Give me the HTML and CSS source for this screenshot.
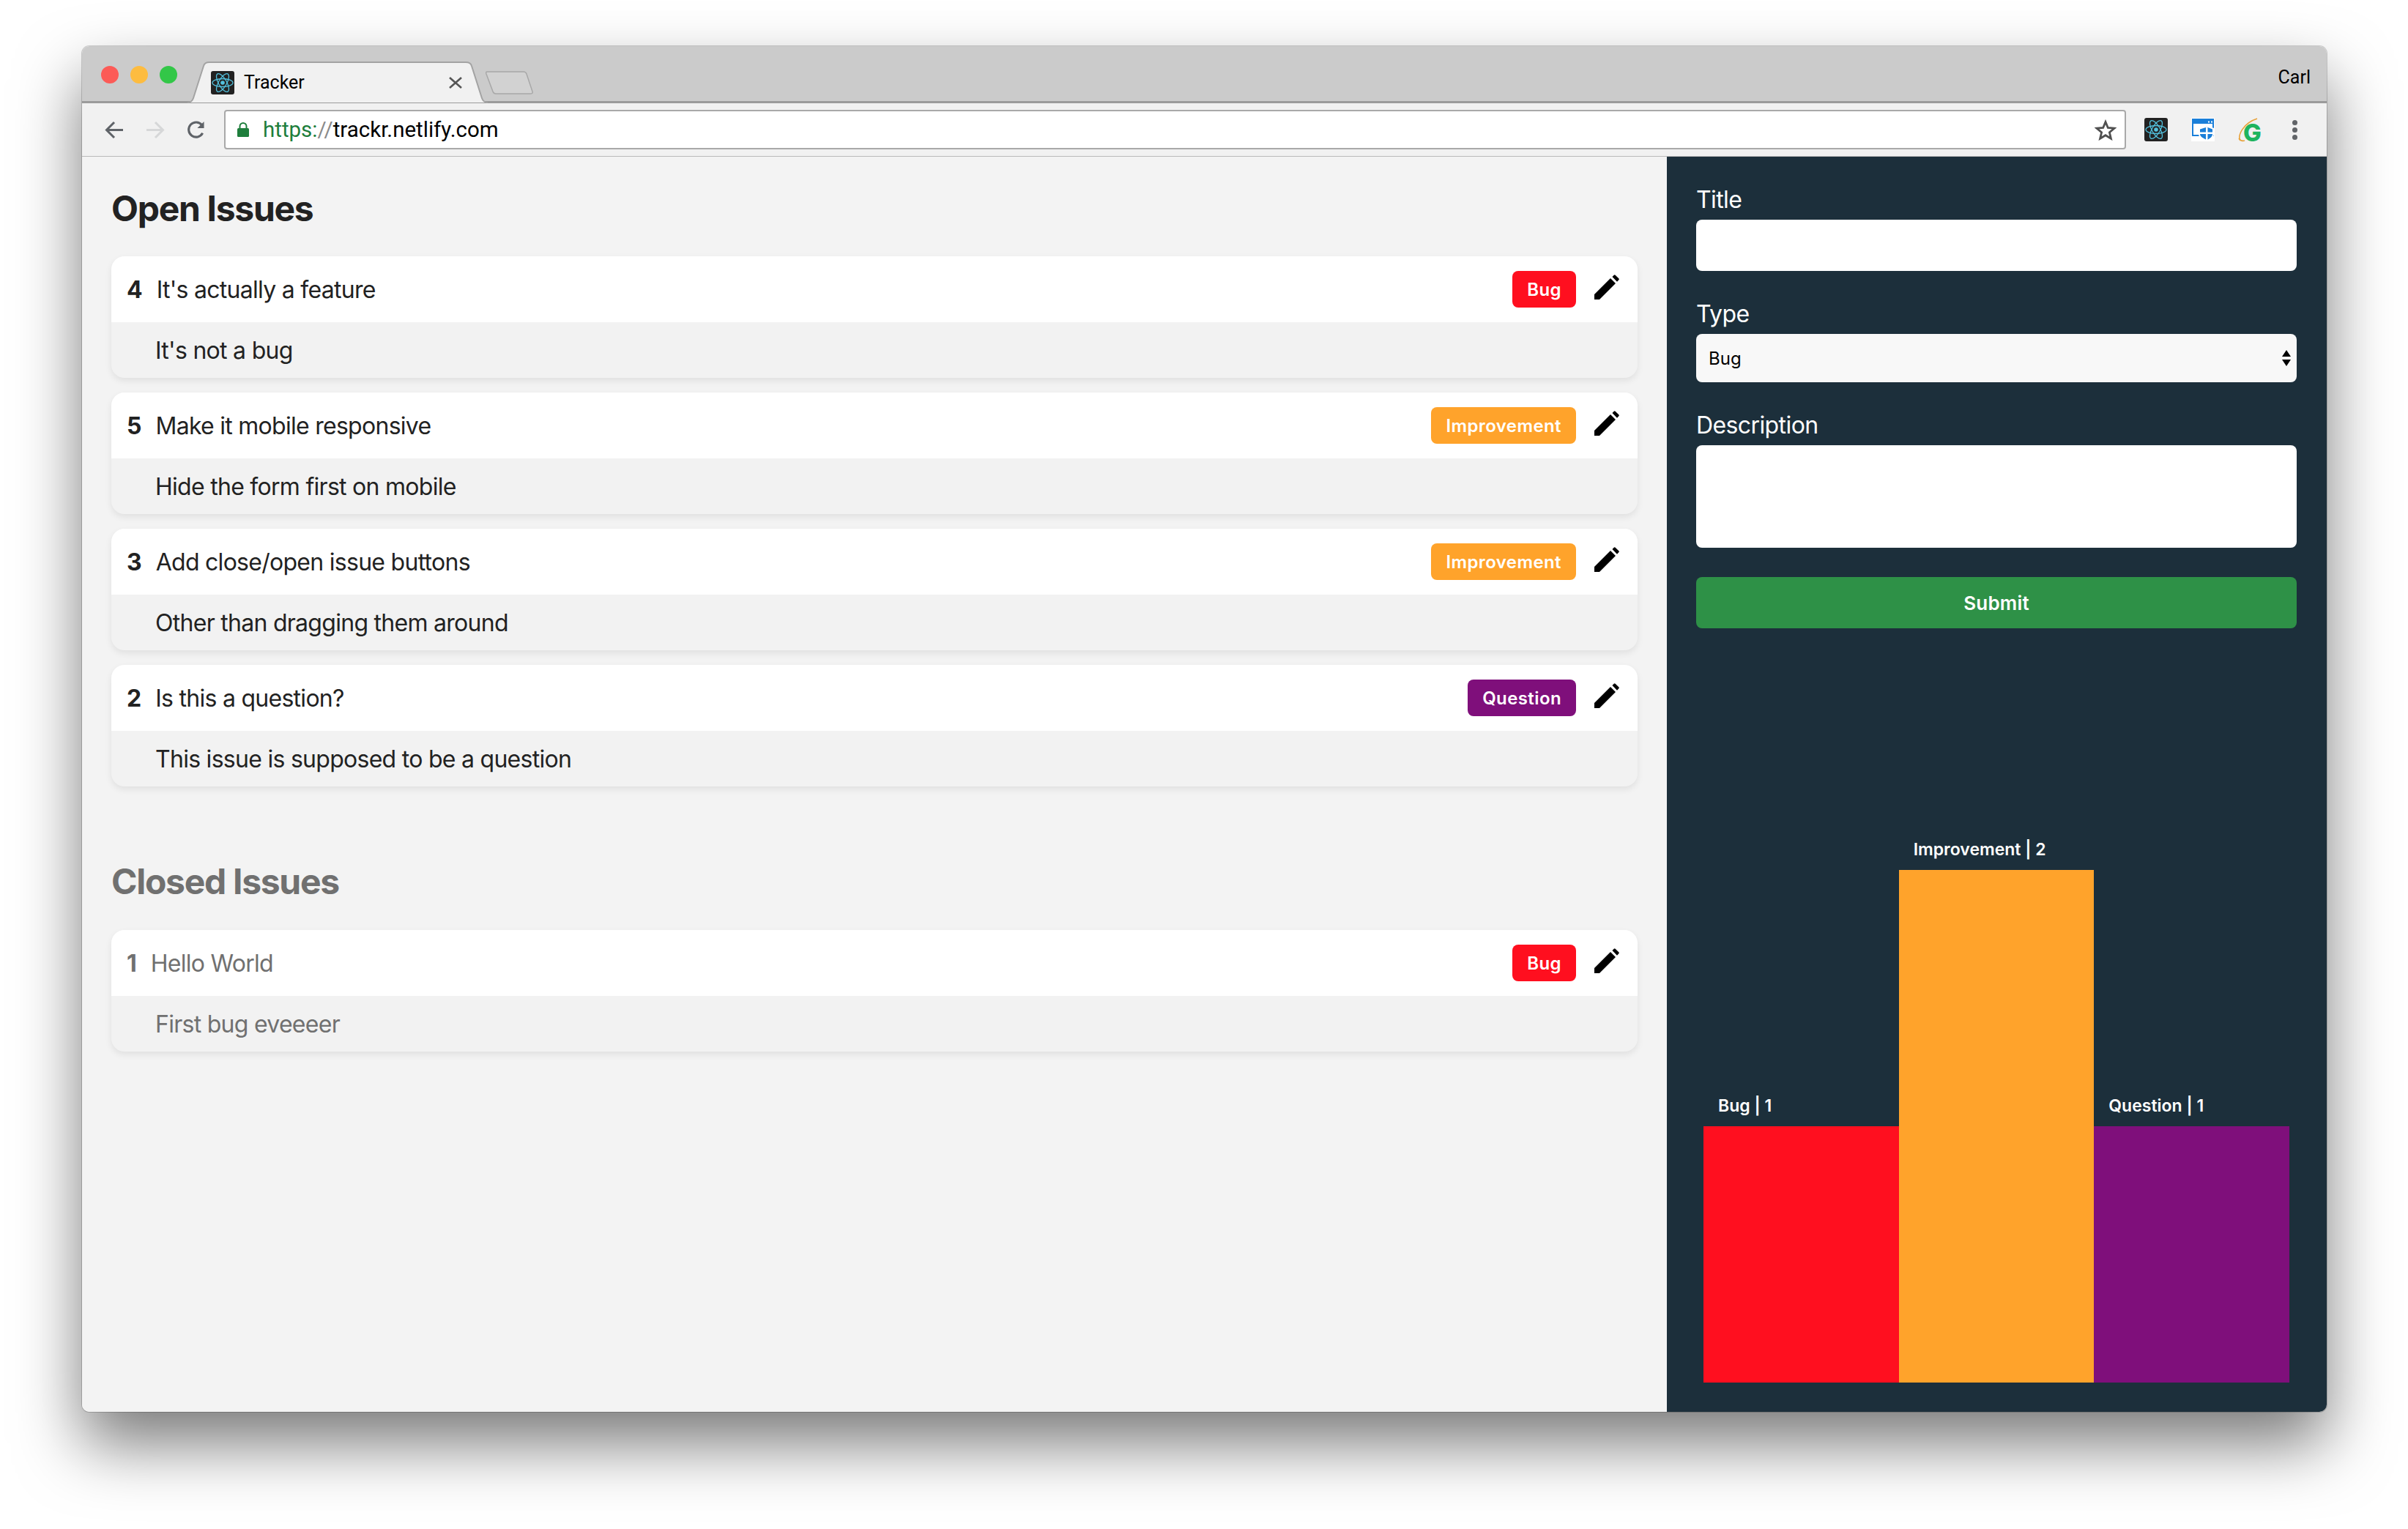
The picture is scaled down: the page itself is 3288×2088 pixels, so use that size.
FILE: index.html
```html
<!DOCTYPE html>
<html lang="en">
  <head>
    <meta charset="utf-8">
    <title>Tracker</title>
    <link rel="stylesheet" href="styles.css">
  </head>
  <body>
    <svg class="defs">
      <defs>
        <symbol id="react-logo" viewBox="0 0 32 32">
          <rect width="32" height="32" rx="3" fill="#222222"/>
          <g fill="none" stroke="#53c1de" stroke-width="1.3">
            <ellipse cx="16" cy="16" rx="14" ry="5.5"/>
            <ellipse cx="16" cy="16" rx="14" ry="5.5" transform="rotate(60 16 16)"/>
            <ellipse cx="16" cy="16" rx="14" ry="5.5" transform="rotate(120 16 16)"/>
          </g>
          <circle cx="16" cy="16" r="2.8" fill="#53c1de"/>
        </symbol>
        <symbol id="pencil" viewBox="0 0 34 34">
          <path d="M0 34V27L22 5 29 12 7 34z"/>
          <path d="M24.5 3 26.7.7q1-1 2 0l4.6 4.6q1 1 0 2L31 9.7z"/>
        </symbol>
      </defs>
    </svg>

    <div class="window">
      <header class="tabbar">
        <div class="lights">
          <span class="light light-red"></span>
          <span class="light light-yellow"></span>
          <span class="light light-green"></span>
        </div>
        <div class="tab">
          <svg class="tab-shape" viewBox="0 0 410 57">
            <path d="M0 56C5 56 7 53 8 50L22 6C23 2 26 1 30 1H380C384 1 387 2 388 6L402 50C403 53 405 56 410 56" fill="#f1f1f1" stroke="#a3a3a3" stroke-width="2"/>
          </svg>
          <svg class="favicon"><use href="#react-logo"/></svg>
          <span class="tab-title">Tracker</span>
          <svg class="tab-close" viewBox="0 0 18 16">
            <path d="M1 1 17 15M17 1 1 15" stroke="#555555" stroke-width="2.6" fill="none"/>
          </svg>
        </div>
        <svg class="new-tab" viewBox="0 0 65 32">
          <path d="M2 1H52Q55 1 56 4L64 28Q65 31 61 31H14Q11 31 10 28L1 4Q0 1 2 1z" fill="#d2d2d2" stroke="#a8a8a8" stroke-width="1.5"/>
        </svg>
        <span class="profile">Carl</span>
      </header>

      <nav class="toolbar">
        <svg class="nav-icon" viewBox="0 0 26 24">
          <path d="M25 12H3M13 1.500 2.500 12 13 22.500" fill="none" stroke="#5f6368" stroke-width="3"/>
        </svg>
        <svg class="nav-icon" viewBox="0 0 26 24">
          <path d="M1 12H23M13 1.500 23.500 12 13 22.500" fill="none" stroke="#d6d7d8" stroke-width="3"/>
        </svg>
        <svg class="nav-icon" viewBox="0 0 26 26">
          <path d="M22 17.500A10.500 10.500 0 1 1 21 6" fill="none" stroke="#5f6368" stroke-width="3.200"/>
          <path d="M24 1V10.500H14.500z" fill="#5f6368"/>
        </svg>
        <div class="omnibox">
          <svg class="lock" viewBox="0 0 16 20">
            <path d="M3.500 9V5.500a4.500 4.500 0 0 1 9 0V9" fill="none" stroke="#1e7e3c" stroke-width="2"/>
            <rect y="8" width="16" height="12" rx="1.500" fill="#1e7e3c"/>
          </svg>
          <span class="url"><span class="url-scheme">https:</span><span class="url-slash">//</span>trackr.netlify.com</span>
          <svg class="star" viewBox="0 0 30 29">
            <path d="M15 3.500 18.300 11.500 27 12.200 20.400 17.800 22.400 26.200 15 21.700 7.600 26.200 9.600 17.800 3 12.200 11.700 11.500z" fill="none" stroke="#505050" stroke-width="2.800"/>
          </svg>
        </div>
        <div class="extensions">
          <svg class="ext"><use href="#react-logo"/></svg>
          <svg class="ext" viewBox="0 0 32 32">
            <rect width="32" height="32" fill="#ffffff"/>
            <path d="M2 2H30V24H2z" fill="none" stroke="#1a7fd9" stroke-width="2"/>
            <path d="M2 3H30V8H2z" fill="#1a7fd9"/>
            <path d="M23 4.500h2v2h-2zM27 4.500h2v2h-2z" fill="#ffffff"/>
            <path d="M10 14 21.500 10.500 31 14V22C31 27 26 30 21.500 32 17 30 10 27 10 22z" fill="#ffffff"/>
            <path d="M12 15.500 21.500 12.500 29 15.500V22C29 26 25 28.500 21.500 30 18 28.500 12 26 12 22z" fill="#1a7fd9"/>
            <path d="M20 12.500h2.500V30H20zM12 19.500H29V22H12z" fill="#ffffff"/>
          </svg>
          <svg class="ext ext-grammar" viewBox="0 -6 38 50">
            <path d="M3 31C-1 24 7 7 26 1" fill="none" stroke="#e8a23a" stroke-width="1.600"/>
            <path d="M1 28C3 31 6 32 9 31" fill="none" stroke="#e8a23a" stroke-width="1.600"/>
            <text x="7" y="32" class="ext-g">G</text>
          </svg>
          <div class="menu-dots"><span></span><span></span><span></span></div>
        </div>
      </nav>

      <div class="content">
        <main class="issues">
          <h1 class="section-title">Open Issues</h1>
          <div class="issue-list">
            <article class="issue">
              <div class="issue-head">
                <strong class="issue-num">4</strong>
                <span class="issue-title">It's actually a feature</span>
                <span class="badge badge-bug">Bug</span>
                <svg class="edit"><use href="#pencil"/></svg>
              </div>
              <p class="issue-body">It's not a bug</p>
            </article>
            <article class="issue">
              <div class="issue-head">
                <strong class="issue-num">5</strong>
                <span class="issue-title">Make it mobile responsive</span>
                <span class="badge badge-improvement">Improvement</span>
                <svg class="edit"><use href="#pencil"/></svg>
              </div>
              <p class="issue-body">Hide the form first on mobile</p>
            </article>
            <article class="issue">
              <div class="issue-head">
                <strong class="issue-num">3</strong>
                <span class="issue-title">Add close/open issue buttons</span>
                <span class="badge badge-improvement">Improvement</span>
                <svg class="edit"><use href="#pencil"/></svg>
              </div>
              <p class="issue-body">Other than dragging them around</p>
            </article>
            <article class="issue">
              <div class="issue-head">
                <strong class="issue-num">2</strong>
                <span class="issue-title">Is this a question?</span>
                <span class="badge badge-question">Question</span>
                <svg class="edit"><use href="#pencil"/></svg>
              </div>
              <p class="issue-body">This issue is supposed to be a question</p>
            </article>
          </div>

          <h1 class="section-title section-closed">Closed Issues</h1>
          <div class="issue-list closed">
            <article class="issue">
              <div class="issue-head">
                <strong class="issue-num">1</strong>
                <span class="issue-title">Hello World</span>
                <span class="badge badge-bug">Bug</span>
                <svg class="edit"><use href="#pencil"/></svg>
              </div>
              <p class="issue-body">First bug eveeeer</p>
            </article>
          </div>
        </main>

        <aside class="sidebar">
          <form class="issue-form">
            <label class="field-label" for="title">Title</label>
            <input class="field field-title" id="title" type="text">
            <label class="field-label" for="type">Type</label>
            <div class="select-wrap">
              <select class="field field-type" id="type">
                <option>Bug</option>
                <option>Improvement</option>
                <option>Question</option>
              </select>
              <svg class="select-arrows" viewBox="0 0 12 22">
                <path d="M6 0 12 9H0zM0 13H12L6 22z"/>
              </svg>
            </div>
            <label class="field-label" for="description">Description</label>
            <textarea class="field field-description" id="description"></textarea>
            <button class="submit" type="button">Submit</button>
          </form>

          <div class="chart">
            <div class="chart-col">
              <span class="chart-label">Bug | 1</span>
              <div class="chart-bar badge-bug" style="height: 350px"></div>
            </div>
            <div class="chart-col">
              <span class="chart-label">Improvement | 2</span>
              <div class="chart-bar badge-improvement" style="height: 700px"></div>
            </div>
            <div class="chart-col">
              <span class="chart-label">Question | 1</span>
              <div class="chart-bar badge-question" style="height: 350px"></div>
            </div>
          </div>
        </aside>
      </div>
    </div>
  </body>
</html>
```

FILE: styles.css
```css
html, body {
  margin: 0;
  height: 100%;
}

body {
  background: #ffffff;
  box-sizing: border-box;
  font-family: Inter, "Liberation Sans", sans-serif;
  padding: 63px 0 0 112px;
}

.defs {
  display: none;
}

.window {
  border-radius: 10px;
  box-shadow: 0 0 0 1px rgba(0, 0, 0, .18), 0 44px 88px rgba(0, 0, 0, .52);
  display: flex;
  flex-direction: column;
  height: 1865px;
  overflow: hidden;
  width: 3065px;
}

/* browser chrome */
.tabbar {
  background: #cbcbcb;
  border-bottom: 3px solid #9b9b9b;
  display: flex;
  flex: none;
  height: 75px;
  padding-left: 26px;
}

.lights {
  display: flex;
  gap: 16px;
  margin-top: 27px;
}

.light {
  border-radius: 50%;
  height: 24px;
  width: 24px;
}

.light-red { background: #fc5b57; }
.light-yellow { background: #fdbc40; }
.light-green { background: #33c748; }

.tab {
  align-items: center;
  align-self: flex-end;
  display: flex;
  flex: none;
  height: 57px;
  margin-bottom: -3px;
  margin-left: 14px;
  padding: 0 35px 0 32px;
  position: relative;
  box-sizing: border-box;
  width: 410px;
}

.tab-shape {
  height: 57px;
  left: 0;
  position: absolute;
  top: 0;
  width: 410px;
}

.favicon {
  flex: none;
  height: 32px;
  position: relative;
  width: 32px;
}

.tab-title {
  color: #000000;
  font-family: Roboto, sans-serif;
  font-size: 25px;
  margin-left: 13px;
  position: relative;
}

.tab-close {
  height: 16px;
  margin-left: auto;
  position: relative;
  width: 18px;
}

.new-tab {
  align-self: flex-end;
  flex: none;
  height: 32px;
  margin-bottom: 9px;
  margin-left: -3px;
  width: 65px;
}

.profile {
  color: #000000;
  font-family: Roboto, sans-serif;
  font-size: 25px;
  margin-left: auto;
  margin-top: 28px;
  padding-right: 22px;
}

.toolbar {
  align-items: center;
  background: #f1f1f1;
  border-bottom: 1px solid #b9b9b9;
  box-sizing: border-box;
  display: flex;
  flex: none;
  gap: 30px;
  height: 73px;
  padding-left: 31px;
}

.nav-icon {
  flex: none;
  height: 25px;
  width: 26px;
}

.omnibox {
  align-items: center;
  background: #ffffff;
  border: 2px solid #a9a9a9;
  border-radius: 4px;
  box-sizing: border-box;
  display: flex;
  flex: none;
  height: 54px;
  margin-left: -5px;
  padding: 0 11px 0 16px;
  width: 2597px;
}

.lock {
  height: 20px;
  width: 16px;
}

.url {
  color: #000000;
  font-family: Roboto, sans-serif;
  font-size: 29.5px;
  margin-bottom: 1px;
  margin-left: 19px;
}

.url-scheme { color: #1e7e3c; }
.url-slash { color: #8a8a8a; }

.star {
  height: 29px;
  margin-left: auto;
  width: 30px;
}

.extensions {
  align-items: center;
  display: flex;
  gap: 32px;
  margin-left: -5px;
}

.ext {
  display: block;
  height: 32px;
  width: 32px;
}

.ext-grammar {
  height: 50px;
  margin: -6px -6px -12px 0;
  width: 38px;
}

.ext-g {
  fill: #1fb45e;
  font-family: Inter, sans-serif;
  font-size: 33px;
  font-weight: 800;
}

.menu-dots {
  display: flex;
  flex-direction: column;
  gap: 3px;
  margin-left: 10px;
}

.menu-dots span {
  background: #616468;
  border-radius: 50%;
  height: 7px;
  width: 7px;
}

/* page */
.content {
  display: flex;
  flex: 1;
  min-height: 0;
}

.issues {
  background: #f3f3f3;
  flex: 1;
  padding: 41px 40px 0;
}

.section-title {
  color: #222222;
  font-size: 48px;
  font-weight: 700;
  letter-spacing: -1.3px;
  line-height: 60px;
  margin: 0 0 35px;
}

.section-closed {
  color: #707070;
  margin-bottom: 36px;
  margin-top: 100px;
}

.issue-list {
  display: flex;
  flex-direction: column;
  gap: 20px;
}

.issue {
  background: #f2f2f2;
  border-radius: 18px;
  box-shadow: 0 4px 10px rgba(0, 0, 0, .08);
  color: #222222;
  font-size: 32px;
  letter-spacing: -.72px;
  overflow: hidden;
}

.issue-head {
  align-items: center;
  background: #ffffff;
  display: flex;
  height: 90px;
  padding: 0 25px 0 21px;
}

.issue-num {
  font-weight: 700;
  letter-spacing: 0;
  margin-right: 19px;
}

.issue-title {
  flex: 1;
}

.badge {
  border-radius: 8px;
  color: #ffffff;
  font-size: 24px;
  font-weight: 600;
  letter-spacing: .4px;
  line-height: 48px;
  padding: 2px 20px 0;
}

.badge-bug { background: #ff0f1f; }
.badge-improvement { background: #ffa32b; }
.badge-question { background: #7f0f7b; }

.edit {
  flex: none;
  height: 34px;
  margin-bottom: 6px;
  margin-left: 25px;
  width: 34px;
}

.issue-body {
  align-items: center;
  display: flex;
  height: 76px;
  margin: 0;
  padding-left: 60px;
}

.closed .issue-num,
.closed .issue-title,
.closed .issue-body {
  color: #707070;
}

/* sidebar */
.sidebar {
  background: #1c2f3b;
  box-sizing: border-box;
  color: #ffffff;
  display: flex;
  flex: none;
  flex-direction: column;
  padding: 39px 41px 40px 40px;
  width: 901px;
}

.issue-form {
  display: flex;
  flex-direction: column;
}

.field-label {
  font-size: 32px;
  letter-spacing: -.6px;
  line-height: 39px;
  padding-bottom: 8px;
}

.field {
  background: #ffffff;
  border: 0;
  border-radius: 8px;
  box-sizing: border-box;
  display: block;
  margin: 0;
  width: 100%;
}

.field-title {
  height: 70px;
  margin-bottom: 39px;
}

.select-wrap {
  margin-bottom: 39px;
  position: relative;
}

.field-type {
  appearance: none;
  background: #f8f8f8;
  color: #000000;
  font-family: Inter, sans-serif;
  font-size: 24px;
  height: 66px;
  padding-left: 17px;
}

.select-arrows {
  height: 22px;
  position: absolute;
  right: 8px;
  top: 22px;
  width: 12px;
}

.field-description {
  height: 140px;
  margin-bottom: 40px;
  resize: none;
}

.submit {
  background: #2e9147;
  border: 0;
  border-radius: 8px;
  color: #ffffff;
  font-family: Inter, sans-serif;
  font-size: 26px;
  font-weight: 600;
  height: 70px;
  letter-spacing: .2px;
}

.chart {
  display: flex;
  margin-top: auto;
  padding: 0 10px;
}

.chart-col {
  display: flex;
  flex: 1;
  flex-direction: column;
  justify-content: flex-end;
}

.chart-label {
  font-size: 23px;
  font-weight: 600;
  line-height: 28px;
  margin-bottom: 14px;
  margin-left: 20px;
}
```
